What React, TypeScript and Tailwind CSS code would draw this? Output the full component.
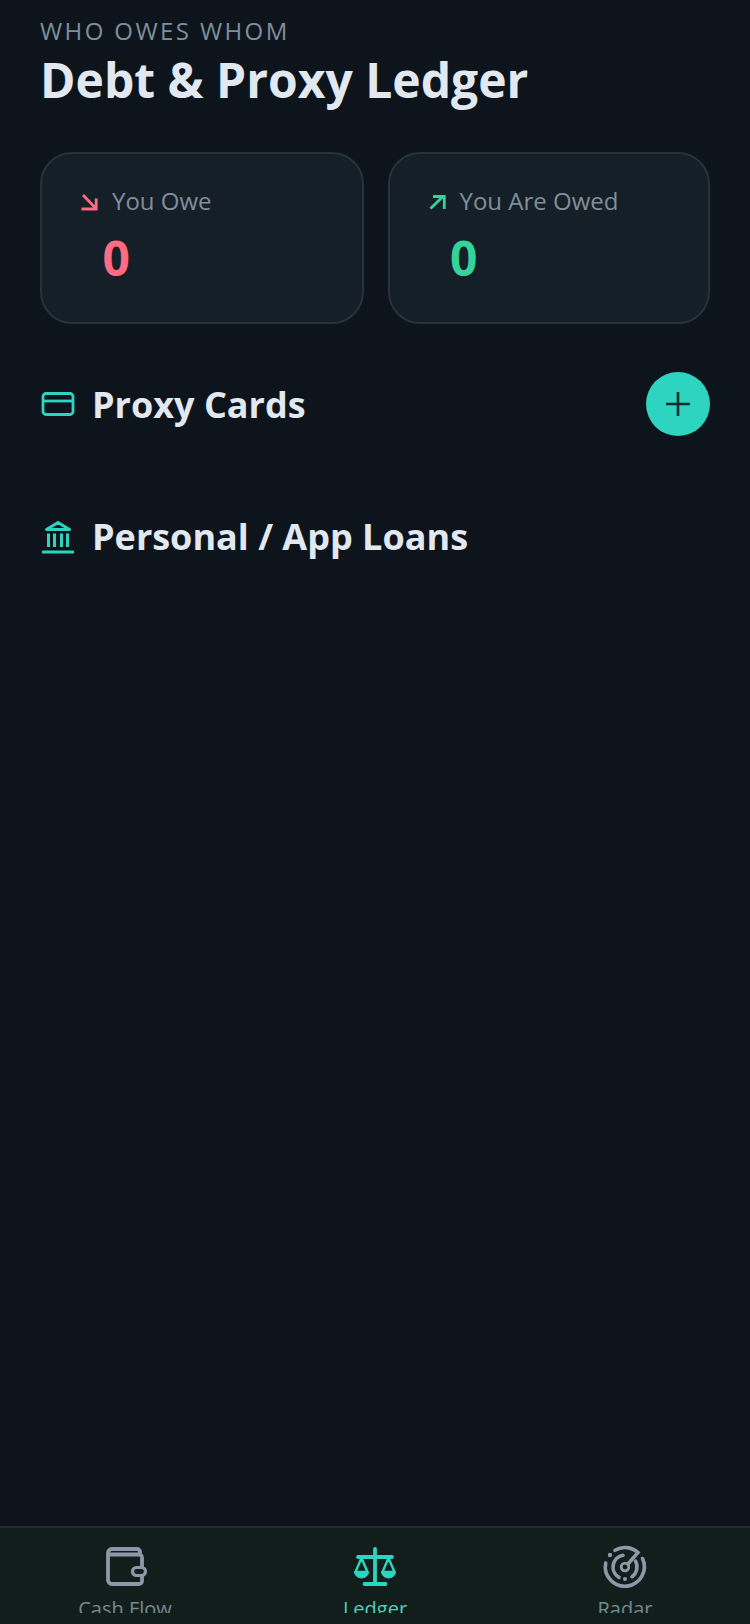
import { ReactNode } from 'react';

const font = { fontFamily: '"Open Sans", sans-serif' };

function SummaryCard({
  icon,
  label,
  value,
  valueClass,
  className,
}: {
  icon: ReactNode;
  label: string;
  value: string;
  valueClass: string;
  className: string;
}) {
  return (
    <div className={`h-[172px] rounded-[32px] border-2 border-[#25333b] bg-[#151f27] pl-[38px] pt-[30px] ${className}`}>
      <div className="flex items-center">
        {icon}
        <span className="ml-[12px] text-[24px] leading-[33px] text-[#808e9b]">{label}</span>
      </div>
      <div className={`ml-[22.5px] mt-[8px] text-[48px] font-bold leading-[65px] ${valueClass}`}>{value}</div>
    </div>
  );
}

function SectionTitle({ icon, title }: { icon: ReactNode; title: string }) {
  return (
    <div className="flex items-center">
      <div className="flex w-[36px] justify-center">{icon}</div>
      <h2 className="ml-[16px] text-[36px] font-bold leading-[49px] text-[#e2e8f0]">{title}</h2>
    </div>
  );
}

function NavItem({ icon, label, labelClass }: { icon: ReactNode; label: string; labelClass: string }) {
  return (
    <div className="flex h-[85px] flex-1 flex-col items-center overflow-hidden pt-[15px]">
      <div className="h-[48px] w-[48px] shrink-0">{icon}</div>
      <span className={`mt-[4px] shrink-0 text-[20px] leading-[27px] ${labelClass}`}>{label}</span>
    </div>
  );
}

export default function App() {
  return (
    <div style={font} className="flex h-[1624px] w-[750px] flex-col overflow-hidden bg-[#0d141c]">
      <main className="flex-1 px-[40px] pt-[14px]">
        <p className="text-[24px] leading-[33px] tracking-[2.4px] text-[#808e9b]">WHO OWES WHOM</p>
        <h1 className="text-[48px] font-bold leading-[65px] text-[#e2e8f0]">Debt &amp; Proxy Ledger</h1>

        <div className="mt-[40px] flex gap-[24px]">
          <SummaryCard
            className="w-[323.5px]"
            label="You Owe"
            value="0"
            valueClass="text-[#ff6b81]"
            icon={
              <svg width="20" height="20" viewBox="0 0 20 20" fill="none" stroke="#ff6b81" strokeWidth="2.8">
                <path d="M3 4 15 16.5M16.2 7.5V18H1.5" />
              </svg>
            }
          />
          <SummaryCard
            className="w-[322.5px]"
            label="You Are Owed"
            value="0"
            valueClass="text-[#34d399]"
            icon={
              <svg width="20" height="20" viewBox="0 0 20 20" fill="none" stroke="#34d399" strokeWidth="2.8">
                <path d="M2.5 17.5 15.5 5M5 5.5H16.3V18" />
              </svg>
            }
          />
        </div>

        <div className="mt-[48px] flex items-center justify-between">
          <SectionTitle
            title="Proxy Cards"
            icon={
              <svg width="36" height="28" viewBox="0 0 36 28" fill="none" stroke="#2dd4bf" strokeWidth="2.8">
                <rect x="3" y="3.5" width="30" height="21" rx="3" />
                <path d="M3 11H33" />
              </svg>
            }
          />
          <button className="flex h-[64px] w-[64px] items-center justify-center rounded-full bg-[#2dd4bf]">
            <svg width="28" height="28" viewBox="0 0 28 28" fill="none" stroke="#0d2a2c" strokeWidth="2.6">
              <path d="M14 2V26M2 14H26" />
            </svg>
          </button>
        </div>

        <div className="mt-[76px]">
          <SectionTitle
            title="Personal / App Loans"
            icon={
              <svg width="32" height="36" viewBox="0 0 32 36" fill="none" stroke="#2dd4bf" strokeWidth="3">
                <path d="M16 3.5 4.5 10.5H27.5z" strokeLinejoin="round" />
                <path d="M6.5 14.5V28M12.5 14.5V28M19.5 14.5V28M25.5 14.5V28" />
                <path d="M1 33H31" strokeLinecap="round" />
              </svg>
            }
          />
        </div>
      </main>

      <nav className="flex h-[98px] border-t-2 border-[#1c302e] bg-[#121e1c]">
        <NavItem
          label="Cash Flow"
          labelClass="text-[#748a8e]"
          icon={
            <svg width="48" height="48" viewBox="0 0 48 48" fill="none" stroke="#8c99a8" strokeWidth="3.8" strokeLinejoin="round">
              <path d="M7 10a4 4 0 0 1 4-4H36a3 3 0 0 1 3 3v2.5" />
              <path d="M7 10V37a4 4 0 0 0 4 4H38a3 3 0 0 0 3-3V33" />
              <path d="M7 11.5H38a3 3 0 0 1 3 3V24" />
              <rect x="31.5" y="24.5" width="13" height="8" rx="4" strokeWidth="3.2" />
            </svg>
          }
        />
        <NavItem
          label="Ledger"
          labelClass="text-[#4fd1b8]"
          icon={
            <svg width="48" height="48" viewBox="0 0 48 48" fill="none" stroke="#2dd4bf" strokeWidth="3.8" strokeLinecap="round" strokeLinejoin="round">
              <path d="M24 6V41M13.5 41H34.5M7 14H41" />
              <path d="M10.5 15 4.5 29H16.5zM37.5 15 31.5 29H43.5z" strokeWidth="2.4" />
              <path d="M3.5 29H17.5A7 6 0 0 1 3.5 29zM30.5 29H44.5A7 6 0 0 1 30.5 29z" fill="#2dd4bf" strokeWidth="1" />
            </svg>
          }
        />
        <NavItem
          label="Radar"
          labelClass="text-[#748a8e]"
          icon={
            <svg width="48" height="48" viewBox="0 0 48 48" fill="none" stroke="#8c99a8" strokeWidth="3.6" strokeLinecap="round">
              <path d="M14 7.3A19.5 19.5 0 0 1 37 9.5L27 21" />
              <path d="M41.5 15.5A19.5 19.5 0 1 1 4.7 20" />
              <path d="M22 12.2A12 12 0 0 0 18 34.4M34.5 18.2A12 12 0 0 1 31 33.7" />
              <circle cx="24" cy="24" r="3.8" strokeWidth="2.8" />
              <circle cx="9" cy="12" r="2.2" fill="#8c99a8" stroke="none" />
              <circle cx="24" cy="36" r="2" fill="#8c99a8" stroke="none" />
            </svg>
          }
        />
      </nav>
    </div>
  );
}
